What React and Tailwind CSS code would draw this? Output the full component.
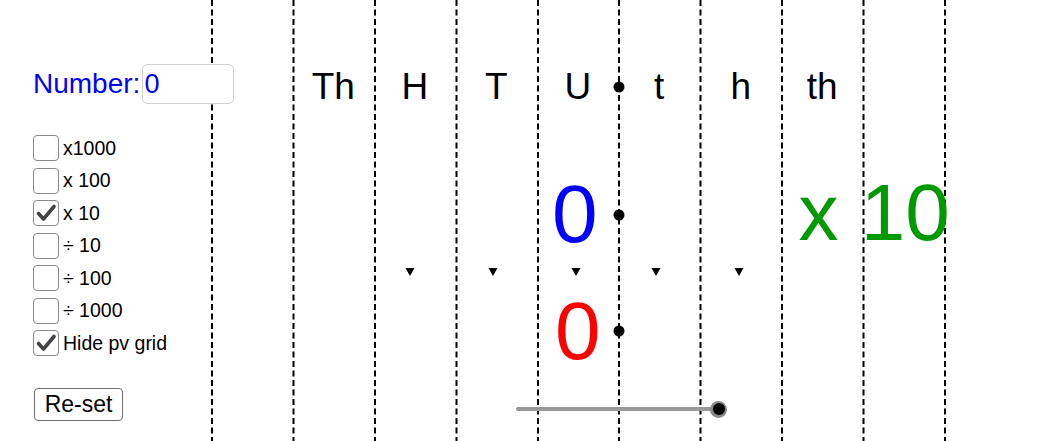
import React from 'react';

const lines = [0, 81.5, 163, 244.5, 326, 407, 488.5, 570, 651.5, 733];
const headers = ['', 'Th', 'H', 'T', 'U', 't', 'h', 'th'];
const options = [
  { label: 'x1000', checked: false },
  { label: 'x 100', checked: false },
  { label: 'x 10', checked: true },
  { label: '÷ 10', checked: false },
  { label: '÷ 100', checked: false },
  { label: '÷ 1000', checked: false },
  { label: 'Hide pv grid', checked: true },
];

const Checkbox = ({ checked }) => (
  <div className="w-[26px] h-[26px] border-[1.5px] border-[#8a8a8a] rounded-[4px] bg-white flex items-center justify-center shrink-0">
    {checked && (
      <svg width="22" height="22" viewBox="0 0 22 22">
        <path d="M3.5 11.5 L8.5 17 L19 4.5" fill="none" stroke="#444" strokeWidth="3.6" strokeLinecap="round" strokeLinejoin="round" />
      </svg>
    )}
  </div>
);

// dashed grid, decimal point dots and column markers
const Grid = () => (
  <svg className="absolute inset-0 pointer-events-none" width="837" height="441">
    {lines.map(x => (
      <line key={x} x1={x + 1} y1="0" x2={x + 1} y2="441" stroke="#000" strokeWidth="2" strokeDasharray="6 3.5" />
    ))}
    {[87, 215, 331].map(y => (
      <circle key={y} cx="408" cy={y} r="5.5" fill="#000" />
    ))}
    {[199, 282, 365, 445, 528].map(x => (
      <polygon key={x} points={`${x - 4.5},268 ${x + 4.5},268 ${x},276`} fill="#000" />
    ))}
  </svg>
);

const App = () => {
  return (
    <div className="w-[1048px] h-[441px] bg-white overflow-hidden flex font-['Liberation_Sans',Arial,sans-serif] text-black">
      {/* Controls */}
      <div className="relative z-10 w-[211px] shrink-0 pl-[33px] pt-[64px]">
        <div className="h-[40px] flex items-center">
          <span className="shrink-0 text-[28px] text-[#0000ff] leading-none">Number:</span>
          <div className="shrink-0 ml-[2px] w-[92px] h-[40px] border border-[#d0d0d0] rounded-[5px] bg-white flex items-center pl-[1px] text-[27px] text-[#0000ff]">0</div>
        </div>
        <div className="mt-[28px] flex flex-col">
          {options.map(o => (
            <div key={o.label} className="h-[32.5px] flex items-center gap-[4px]">
              <Checkbox checked={o.checked} />
              <span className="text-[19.5px] leading-none">{o.label}</span>
            </div>
          ))}
        </div>
        <button className="mt-[28px] ml-[1px] w-[89px] h-[33px] border border-[#6f6f6f] rounded-[4px] bg-white text-[23px] leading-none flex items-center justify-center">
          Re-set
        </button>
      </div>

      {/* Place value board */}
      <div className="relative flex-1">
        <Grid />
        <div className="relative flex flex-col pt-[66px]">
          <div className="grid grid-cols-[repeat(10,81.5px)] h-[42px] text-[37px] leading-[42px]">
            {headers.map((h, i) => (
              <div key={i} className="text-center">{h}</div>
            ))}
          </div>
          <div className="grid grid-cols-[repeat(10,81.5px)] mt-[65px] h-[82px] text-[82px] leading-none">
            <div className="col-start-5 text-center pr-[6px] text-[#0000ff]">0</div>
            <div className="col-start-8 col-span-3 pl-[17px] text-[80px] text-[#009900] whitespace-nowrap">x 10</div>
          </div>
          <div className="grid grid-cols-[repeat(10,81.5px)] mt-[35px] h-[82px] text-[82px] leading-none">
            <div className="col-start-5 text-center text-[#ff0000]">0</div>
          </div>
          <div className="mt-[29px] h-[16px] ml-[305px] w-[214px] flex items-center">
            <div className="w-[200px] h-[4px] rounded-full bg-[#999]" />
            <div className="-ml-[6px] w-[17px] h-[17px] rounded-full bg-[#888] flex items-center justify-center">
              <div className="w-[12px] h-[12px] rounded-full bg-black" />
            </div>
          </div>
        </div>
      </div>
    </div>
  );
};

export default App;
